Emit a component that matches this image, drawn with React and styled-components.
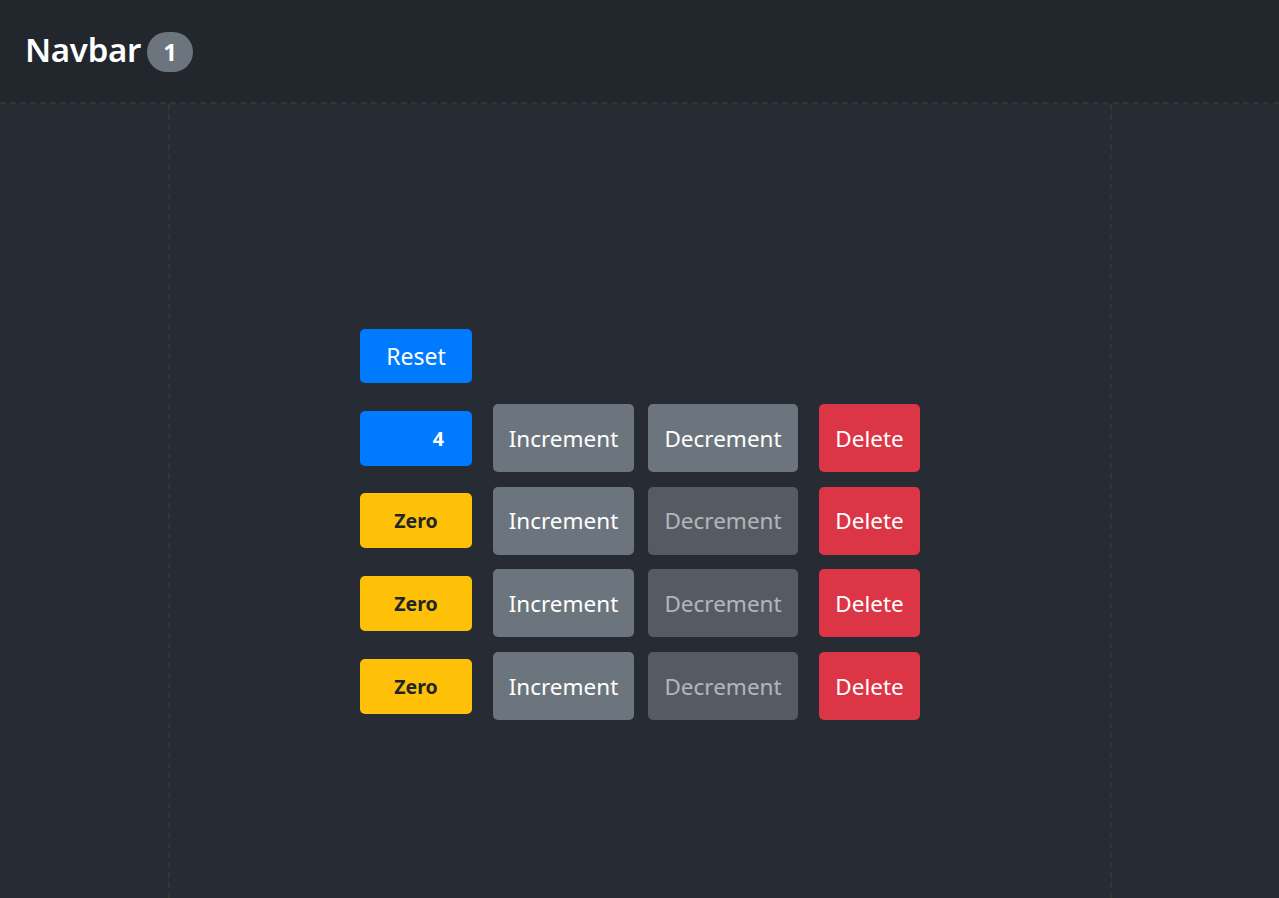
import React from "react";
import styled, { createGlobalStyle, css } from "styled-components";

const Global = createGlobalStyle`
  html, body { margin: 0; padding: 0; background: #272b34; }
  body { font-family: "Noto Sans", "Open Sans", sans-serif; color: #fff; }
  #root { min-height: 898px; }
`;

const Nav = styled.nav`
  height: 102px;
  background: #22262d;
  border-bottom: 2px dashed #33352f;
  display: flex;
  align-items: center;
  padding-left: 25px;
  box-sizing: content-box;
`;

const Brand = styled.span`
  font-size: 33px;
  font-weight: 600;
  letter-spacing: -0.3px;
  display: flex;
  align-items: center;
  gap: 6px;
  margin-top: -3px;
`;

const Pill = styled.span`
  display: inline-flex;
  align-items: center;
  justify-content: center;
  width: 46px;
  height: 40px;
  border-radius: 20px;
  background: #6c757d;
  font-size: 24px;
  font-weight: 700;
  margin-top: 4px;
`;

const Main = styled.main`
  margin: 0 167px 0 168px;
  height: 794px;
  border-left: 2px dashed #33352f;
  border-right: 2px dashed #33352f;
  padding: 225.4px 0 0 190px;
  box-sizing: border-box;
`;

const Stack = styled.div`
  display: flex;
  flex-direction: column;
  gap: 14.67px;
`;

const Row = styled.div`
  display: flex;
  align-items: center;
`;

const base = css`
  border: none;
  border-radius: 5px;
  font-family: inherit;
  color: #fff;
  display: inline-flex;
  align-items: center;
  justify-content: center;
  box-sizing: border-box;
  padding: 0;
`;

const ResetButton = styled.button`
  ${base};
  width: 112px;
  height: 54px;
  background: #007bff;
  font-size: 23px;
  margin-bottom: 6px;
`;

const Badge = styled.span`
  ${base};
  width: 112px;
  height: 55px;
  font-size: 19.5px;
  font-weight: 700;
  background: ${(p) => (p.$zero ? "#ffc107" : "#007bff")};
  color: ${(p) => (p.$zero ? "#212529" : "#fff")};
  justify-content: ${(p) => (p.$zero ? "center" : "flex-end")};
  padding-right: ${(p) => (p.$zero ? "0" : "28px")};
`;

const Btn = styled.button`
  ${base};
  height: 68px;
  font-size: 22.5px;
  padding: 0 16px;
  margin-left: ${(p) => p.$ml}px;
  width: ${(p) => p.$w}px;
  background: ${(p) => (p.$danger ? "#dc3545" : "#6c757d")};
  ${(p) =>
    p.disabled &&
    css`
      opacity: 0.65;
    `}
`;

const counters = [4, 0, 0, 0];

export default function App() {
  return (
    <>
      <Global />
      <Nav>
        <Brand>
          Navbar <Pill>1</Pill>
        </Brand>
      </Nav>
      <Main>
        <Stack>
          <Row>
            <ResetButton>Reset</ResetButton>
          </Row>
          {counters.map((v, i) => (
            <Row key={i}>
              <Badge $zero={v === 0}>{v === 0 ? "Zero" : v}</Badge>
              <Btn $ml={21} $w={141}>Increment</Btn>
              <Btn $ml={14} $w={150} disabled={v === 0}>
                Decrement
              </Btn>
              <Btn $ml={21} $w={101} $danger>
                Delete
              </Btn>
            </Row>
          ))}
        </Stack>
      </Main>
    </>
  );
}
